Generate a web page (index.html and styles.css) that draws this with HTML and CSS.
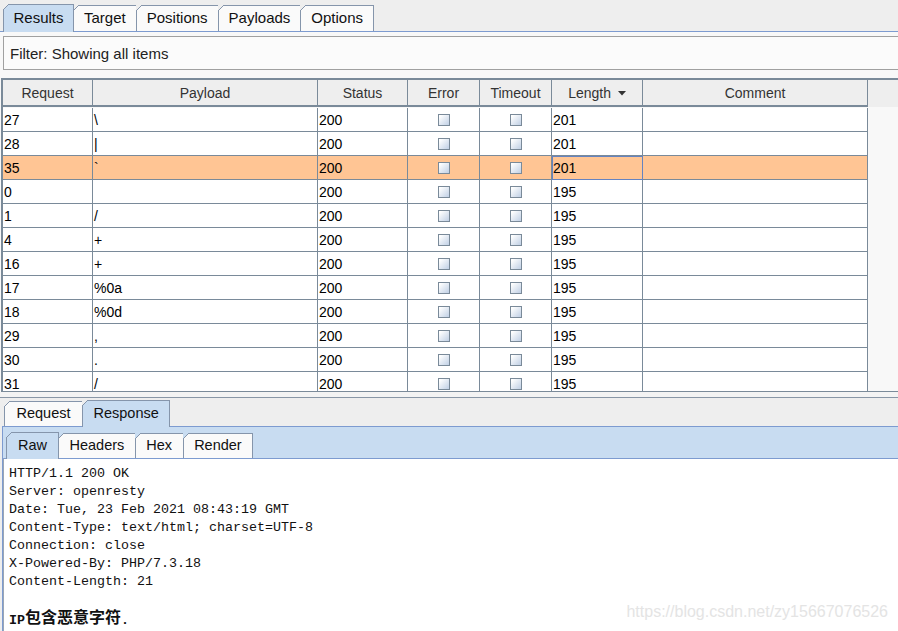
FILE: index.html
```html
<!DOCTYPE html>
<html>
<head>
<meta charset="utf-8">
<title>Intruder results</title>
<link rel="stylesheet" href="styles.css">
</head>
<body>
<div class="tabs top-tabs">
  <div class="tab active">Results</div>
  <div class="tab">Target</div>
  <div class="tab">Positions</div>
  <div class="tab">Payloads</div>
  <div class="tab">Options</div>
</div>
<div class="results-panel">
  <div class="filter">Filter: Showing all items</div>
  <div class="table-wrap">
    <div class="row head">
      <div class="cell">Request</div>
      <div class="cell">Payload</div>
      <div class="cell">Status</div>
      <div class="cell">Error</div>
      <div class="cell">Timeout</div>
      <div class="cell">Length <svg class="sort" width="8" height="5" viewBox="0 0 8 5"><polygon points="0,0 8,0 4,4.5" fill="#333"/></svg></div>
      <div class="cell">Comment</div>
    </div>
    <div class="row"><div class="cell">27</div><div class="cell">\</div><div class="cell">200</div><div class="cell c"><span class="cb"></span></div><div class="cell c"><span class="cb"></span></div><div class="cell">201</div><div class="cell"></div></div>
    <div class="row"><div class="cell">28</div><div class="cell">|</div><div class="cell">200</div><div class="cell c"><span class="cb"></span></div><div class="cell c"><span class="cb"></span></div><div class="cell">201</div><div class="cell"></div></div>
    <div class="row sel"><div class="cell">35</div><div class="cell">`</div><div class="cell">200</div><div class="cell c"><span class="cb"></span></div><div class="cell c"><span class="cb"></span></div><div class="cell focus">201</div><div class="cell"></div></div>
    <div class="row"><div class="cell">0</div><div class="cell"></div><div class="cell">200</div><div class="cell c"><span class="cb"></span></div><div class="cell c"><span class="cb"></span></div><div class="cell">195</div><div class="cell"></div></div>
    <div class="row"><div class="cell">1</div><div class="cell">/</div><div class="cell">200</div><div class="cell c"><span class="cb"></span></div><div class="cell c"><span class="cb"></span></div><div class="cell">195</div><div class="cell"></div></div>
    <div class="row"><div class="cell">4</div><div class="cell">+</div><div class="cell">200</div><div class="cell c"><span class="cb"></span></div><div class="cell c"><span class="cb"></span></div><div class="cell">195</div><div class="cell"></div></div>
    <div class="row"><div class="cell">16</div><div class="cell">+</div><div class="cell">200</div><div class="cell c"><span class="cb"></span></div><div class="cell c"><span class="cb"></span></div><div class="cell">195</div><div class="cell"></div></div>
    <div class="row"><div class="cell">17</div><div class="cell">%0a</div><div class="cell">200</div><div class="cell c"><span class="cb"></span></div><div class="cell c"><span class="cb"></span></div><div class="cell">195</div><div class="cell"></div></div>
    <div class="row"><div class="cell">18</div><div class="cell">%0d</div><div class="cell">200</div><div class="cell c"><span class="cb"></span></div><div class="cell c"><span class="cb"></span></div><div class="cell">195</div><div class="cell"></div></div>
    <div class="row"><div class="cell">29</div><div class="cell">,</div><div class="cell">200</div><div class="cell c"><span class="cb"></span></div><div class="cell c"><span class="cb"></span></div><div class="cell">195</div><div class="cell"></div></div>
    <div class="row"><div class="cell">30</div><div class="cell">.</div><div class="cell">200</div><div class="cell c"><span class="cb"></span></div><div class="cell c"><span class="cb"></span></div><div class="cell">195</div><div class="cell"></div></div>
    <div class="row"><div class="cell">31</div><div class="cell">/</div><div class="cell">200</div><div class="cell c"><span class="cb"></span></div><div class="cell c"><span class="cb"></span></div><div class="cell">195</div><div class="cell"></div></div>
  </div>
</div>
<div class="split"></div>
<div class="tabs msg-tabs">
  <div class="tab">Request</div>
  <div class="tab active">Response</div>
</div>
<div class="msg-panel">
  <div class="tabs sub-tabs">
    <div class="tab active">Raw</div>
    <div class="tab">Headers</div>
    <div class="tab">Hex</div>
    <div class="tab">Render</div>
  </div>
  <pre class="raw">HTTP/1.1 200 OK
Server: openresty
Date: Tue, 23 Feb 2021 08:43:19 GMT
Content-Type: text/html; charset=UTF-8
Connection: close
X-Powered-By: PHP/7.3.18
Content-Length: 21

<b>IP<span class="cjk">包含恶意字符</span>.</b></pre>
</div>
<div class="watermark">https://blog.csdn.net/zy15667076526</div>
</body>
</html>
```
FILE: styles.css
```css
* { box-sizing: border-box; }
html, body { margin: 0; padding: 0; }
body {
  width: 898px;
  height: 631px;
  overflow: hidden;
  position: relative;
  background: #eeeeee;
  font-family: "Liberation Sans", Arial, sans-serif;
  color: #000;
}

/* tabs */
.tabs { display: flex; align-items: flex-end; }
.tab {
  position: relative;
  padding: 0 10.5px;
  border: 1px solid #8595ab;
  border-bottom: none;
  background: #fafafa;
  margin-left: -1px;
  color: #111;
  white-space: nowrap;
  font-size: 14.5px;
}
.tab:first-child { margin-left: 0; }
.tab::before {
  content: "";
  position: absolute;
  left: -1px;
  top: -1px;
  width: 6px;
  height: 6px;
  background: linear-gradient(135deg, #eeeeee 0 42%, #8595ab 42% 58%, transparent 58%);
}
.tab.active { background: #c8dcf1; z-index: 1; margin-bottom: -1px; }

.top-tabs { height: 31px; padding-left: 3px; }
.top-tabs .tab { height: 26px; line-height: 24px; font-size: 15px; padding: 0 10px; }
.top-tabs .tab.active { height: 28px; line-height: 26px; padding: 0 9.5px; }

/* results panel */
.results-panel {
  border-top: 1px solid #7d9bd0;
  background: #f8f8f8;
  padding-top: 4px;
}
.filter {
  margin-left: 3px;
  height: 34px;
  line-height: 33px;
  border: 1px solid #a0a0a0;
  border-right: none;
  background: #fbfbfb;
  padding-left: 6px;
  font-size: 15px;
  color: #222;
}
.table-wrap {
  margin-top: 8px;
  margin-left: 1px;
  height: 314px;
  overflow: hidden;
  border-top: 2px solid #7a8a99;
  border-left: 2px solid #7a8a99;
  border-bottom: 1px solid #7a8a99;
  background: #f8f8f8;
}
.row {
  display: grid;
  grid-template-columns: 90px 225px 90px 72px 72px 91px 225px;
  height: 24px;
  font-size: 14px;
}
.row .cell {
  background: #fff;
  border-right: 1px solid #7a8a99;
  border-bottom: 1px solid #7a8a99;
  line-height: 23px;
  padding: 1px 0 0 1px;
  white-space: nowrap;
  overflow: hidden;
}
.row.head {
  height: 27px;
  margin-bottom: 1px;
  background: #eeeeee;
  grid-template-columns: 90px 225px 90px 72px 72px 91px 225px 1fr;
}
.row.head .cell {
  background: #eeeeee;
  border-bottom: 2px solid #7a8a99;
  text-align: center;
  color: #333;
  line-height: 25px;
  padding: 1px 0 0 0;
}
.sort { vertical-align: 2px; margin-left: 3px; }
.row .cell.c { display: flex; align-items: center; justify-content: center; padding: 0; }
.cb {
  width: 12px;
  height: 12px;
  border: 1px solid #7a8a99;
  background: linear-gradient(135deg, #ffffff 10%, #c3d2e6 95%);
}
.row.sel .cell { background: #ffc594; }
.row .cell.focus { outline: 1px solid #6583c0; outline-offset: -1px; }

/* splitter */
.split {
  height: 6px;
  background: #f3f3f3;
  border-bottom: 1px solid #8896a6;
}

/* message tabs */
.msg-tabs { height: 28px; padding-left: 4px; }
.msg-tabs .tab { height: 25px; line-height: 23px; padding: 0 11.5px; }
.msg-tabs .tab.active { height: 27px; line-height: 25px; padding: 0 10.5px; }

.msg-panel {
  margin-left: 2px;
  border-top: 1px solid #7d9bd0;
  border-left: 1px solid #7d9bd0;
  background: #c8dcf1;
}
.sub-tabs { height: 31px; padding-left: 3px; }
.sub-tabs .tab { height: 25px; line-height: 23px; }
.sub-tabs .tab::before { background: linear-gradient(135deg, #c8dcf1 0 42%, #8595ab 42% 58%, transparent 58%); }
.sub-tabs .tab.active { height: 27px; line-height: 25px; padding: 0 11px; }

.raw {
  margin: 0;
  height: 173px;
  border-top: 1px solid #7d9bd0;
  border-left: 1px solid #9aa6b4;
  background: #fff;
  padding: 6px 0 0 5px;
  font-family: "Liberation Mono", "Courier New", monospace;
  font-size: 13.333px;
  line-height: 18px;
  color: #111;
}
.raw b { font-weight: bold; }
.cjk { font-family: "Noto Sans CJK SC", sans-serif; font-size: 16px; line-height: 14px; vertical-align: 1px; }

.watermark {
  position: absolute;
  right: 10px;
  top: 603px;
  font-size: 16px;
  line-height: 18px;
  color: #e4e4e4;
  font-family: "Liberation Sans", Arial, sans-serif;
}
```
